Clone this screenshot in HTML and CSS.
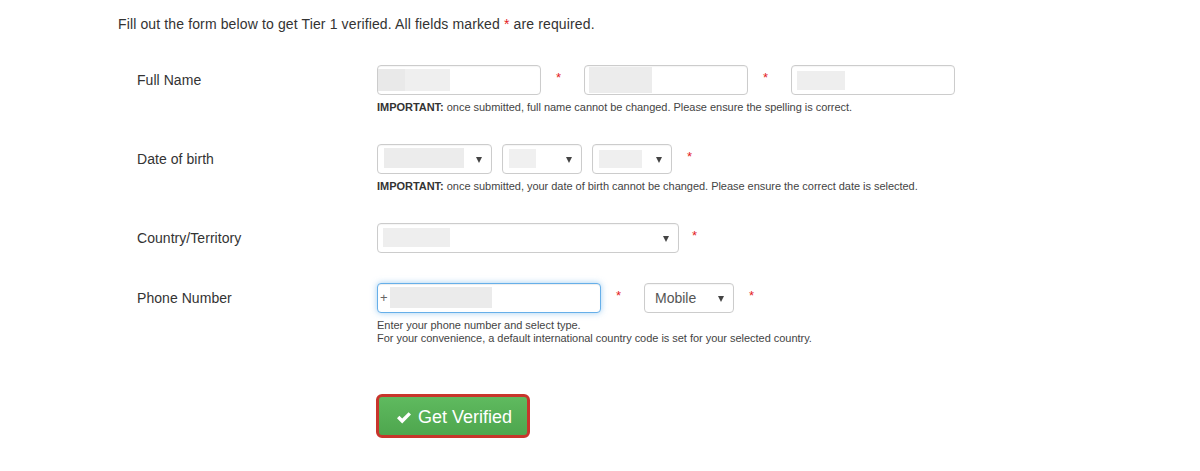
FILE: index.html
```html
<!DOCTYPE html>
<html>
<head>
<meta charset="utf-8">
<link rel="stylesheet" href="styles.css">
</head>
<body>
<div class="page">
  <p class="intro">Fill out the form below to get Tier 1 verified. All fields marked <span class="req">*</span> are required.</p>

  <form class="form">
    <div class="row">
      <label class="label">Full Name</label>
      <div class="field">
        <div class="controls">
          <div class="input w-name"><span class="blur b1"></span><span class="blur b1b"></span></div>
          <span class="star">*</span>
          <div class="input w-name2"><span class="blur b2"></span></div>
          <span class="star">*</span>
          <div class="input w-name"><span class="blur b3"></span></div>
        </div>
        <p class="help"><b>IMPORTANT:</b> once submitted, full name cannot be changed. Please ensure the spelling is correct.</p>
      </div>
    </div>

    <div class="row">
      <label class="label">Date of birth</label>
      <div class="field">
        <div class="controls">
          <div class="input select w-month"><span class="blur d1"></span><span class="arrow"></span></div>
          <div class="input select w-day"><span class="blur d2"></span><span class="arrow"></span></div>
          <div class="input select w-day"><span class="blur d3"></span><span class="arrow"></span></div>
          <span class="star">*</span>
        </div>
        <p class="help"><b>IMPORTANT:</b> once submitted, your date of birth cannot be changed. Please ensure the correct date is selected.</p>
      </div>
    </div>

    <div class="row">
      <label class="label">Country/Territory</label>
      <div class="field">
        <div class="controls">
          <div class="input select w-country"><span class="blur c1"></span><span class="arrow"></span></div>
          <span class="star star-c">*</span>
        </div>
      </div>
    </div>

    <div class="row">
      <label class="label">Phone Number</label>
      <div class="field">
        <div class="controls">
          <div class="input focus w-phone"><span class="plus">+</span><span class="blur p1"></span></div>
          <span class="star">*</span>
          <div class="input select w-type"><span class="value">Mobile</span><span class="arrow"></span></div>
          <span class="star">*</span>
        </div>
        <p class="help">Enter your phone number and select type.<br>For your convenience, a default international country code is set for your selected country.</p>
      </div>
    </div>

    <div class="actions">
      <button type="button" class="btn">
        <svg class="check" viewBox="0 0 16 13" width="16" height="13"><path d="M1 7.2 L3.4 4.8 L6.2 7.6 L12.6 1.2 L15 3.6 L6.2 12.4 Z" fill="#fff"/></svg>
        <span>Get Verified</span>
      </button>
    </div>
  </form>
</div>
</body>
</html>
```

FILE: styles.css
```css
* { box-sizing: border-box; }
html, body { margin: 0; background: #fff; }
body {
  font-family: "Liberation Sans", Arial, Helvetica, sans-serif;
  font-size: 14px;
  color: #333;
}
.page { padding: 14px 0 0 118px; }
.intro { margin: 0; line-height: 20px; letter-spacing: 0.13px; }
.req { color: #e4201d; }

.form { margin-top: 31px; }
.row { display: flex; margin-bottom: 30px; }
.label { width: 259px; padding-left: 19px; line-height: 30px; letter-spacing: 0.05px; }
.field { display: flex; flex-direction: column; }
.controls { display: flex; align-items: flex-start; }

.input {
  position: relative;
  height: 30px;
  border: 1px solid #ccc;
  border-radius: 4px;
  background: #fff;
  box-shadow: inset 0 1px 1px rgba(0,0,0,0.04);
}
.input.focus {
  border-color: #66afe9;
  box-shadow: inset 0 1px 1px rgba(0,0,0,.075), 0 0 6px rgba(102,175,233,.6);
}
.star {
  width: 43px;
  padding-left: 15px;
  line-height: 26px;
  color: #e4201d;
  font-size: 13px;
}
.select { margin-right: 10px; }
.select + .star { margin-left: -10px; }
.select + .star-c { margin-left: -12px; }

.w-name { width: 164px; }
.w-name2 { width: 164px; }
.w-month { width: 115px; }
.w-day { width: 80px; }
.w-country { width: 302px; }
.w-phone { width: 224px; }
.w-type { width: 90px; }

.blur { position: absolute; display: block; }
.b1 { left: 0; top: 3px; width: 27px; height: 22px; background: #e9e9e9; }
.b1b { left: 27px; top: 3px; width: 45px; height: 22px; background: #efefef; }
.b2 { left: 4px; top: 1px; width: 63px; height: 26px; background: #ececec; }
.b3 { left: 5px; top: 5px; width: 48px; height: 19px; background: #eeeeee; }
.d1 { left: 6px; top: 3px; width: 80px; height: 20px; background: #ececec; }
.d2 { left: 6px; top: 4px; width: 27px; height: 19px; background: #f0f0f0; }
.d3 { left: 6px; top: 5px; width: 43px; height: 18px; background: #efefef; }
.c1 { left: 5px; top: 4px; width: 67px; height: 19px; background: #eeeeee; }
.p1 { left: 12px; top: 3px; width: 102px; height: 21px; background: #ebebeb; }
.plus { position: absolute; left: 2px; top: 0; line-height: 28px; color: #666; font-size: 13px; }
.value { display: block; padding-left: 10px; line-height: 28px; color: #555; font-size: 14px; }

.arrow {
  position: absolute;
  right: 9px;
  top: 12px;
  width: 0; height: 0;
  border-left: 3.5px solid transparent;
  border-right: 3.5px solid transparent;
  border-top: 6px solid #444;
}

.help {
  margin: 6px 0 0;
  font-size: 11px;
  line-height: 13px;
  color: #444;
  letter-spacing: -0.03px;
}
.help b { color: #333; }

.actions { padding-left: 258px; margin-top: 49px; }
.btn {
  display: inline-flex;
  align-items: center;
  justify-content: center;
  gap: 6px;
  width: 154px;
  height: 44px;
  padding: 3px 0 0 2px;
  border: 3px solid #c8352c;
  border-radius: 6px;
  background: linear-gradient(#5fba5f, #4ea64e);
  color: #fff;
  font-family: "Liberation Sans", Arial, sans-serif;
  font-size: 18px;
  cursor: pointer;
}
.check { display: block; margin-top: -1px; }
```
